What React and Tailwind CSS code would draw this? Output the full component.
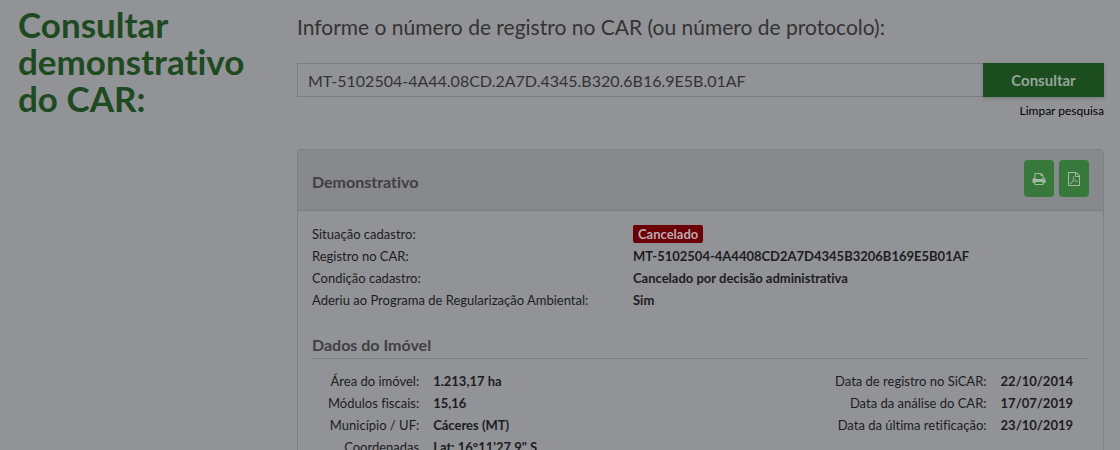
const situacao = [
  { label: 'Situação cadastro:', value: 'Cancelado', badge: true },
  { label: 'Registro no CAR:', value: 'MT-5102504-4A4408CD2A7D4345B3206B169E5B01AF' },
  { label: 'Condição cadastro:', value: 'Cancelado por decisão administrativa' },
  { label: 'Aderiu ao Programa de Regularização Ambiental:', value: 'Sim' },
];

const imovel = [
  { label: 'Área do imóvel:', value: '1.213,17 ha' },
  { label: 'Módulos fiscais:', value: '15,16' },
  { label: 'Município / UF:', value: 'Cáceres (MT)' },
  { label: 'Coordenadas', value: 'Lat: 16°11\'27.9" S' },
];

const datas = [
  { label: 'Data de registro no SiCAR:', value: '22/10/2014' },
  { label: 'Data da análise do CAR:', value: '17/07/2019' },
  { label: 'Data da última retificação:', value: '23/10/2019' },
];

function PrintIcon() {
  return (
    <svg viewBox="0 0 1792 1792" className="size-3.5" fill="currentColor" aria-hidden="true">
      <path d="M448 1536h896v-256h-896v256zm0-640h896v-384h-160q-40 0-68-28t-28-68v-160h-640v640zm1152 64q0-26-19-45t-45-19-45 19-19 45 19 45 45 19 45-19 19-45zm128 0v416q0 13-9.5 22.5t-22.5 9.5h-224v160q0 40-28 68t-68 28h-960q-40 0-68-28t-28-68v-160h-224q-13 0-22.5-9.5t-9.5-22.5v-416q0-79 56.5-135.5t135.5-56.5h64v-544q0-40 28-68t68-28h672q40 0 88 20t76 48l152 152q28 28 48 76t20 88v256h64q79 0 135.5 56.5t56.5 135.5z" />
    </svg>
  );
}

function PdfIcon() {
  return (
    <svg viewBox="0 0 1792 1792" className="size-3.5" fill="currentColor" aria-hidden="true">
      <path d="M1596 380q28 28 48 76t20 88v1152q0 40-28 68t-68 28h-1344q-40 0-68-28t-28-68v-1600q0-40 28-68t68-28h896q40 0 88 20t76 48zm-444-244v376h376q-10-29-22-41l-313-313q-12-12-41-22zm384 1528v-1024h-416q-40 0-68-28t-28-68v-416h-768v1536h1280zm-514-593q33 26 84 56 59-7 117-7 147 0 177 49 16 22 2 52 0 1-1 2l-2 2v1q-6 38-71 38-48 0-115-20t-130-53q-221 24-392 83-153 262-242 262-15 0-28-7l-24-12q-1-1-6-5-10-10-6-36 9-40 56-91.5t132-96.5q14-9 23 6 2 2 2 4 52-85 107-197 68-136 104-262-24-82-30.5-159.5t6.5-127.5q11-40 42-40h22q23 0 35 15 18 21 9 68-2 6-4 8 1 3 1 8v30q-2 123-14 192 55 164 146 238zm-576 411q52-24 137-158-51 40-87.5 84t-49.5 74zm398-920q-15 42-2 132 1-7 7-44 0-3 7-43 1-4 4-8-1-1-1-2-1-2-1-3-1-22-13-36 0 1-1 2v2zm-124 661q135-54 284-81-2-1-13-9.5t-16-13.5q-76-67-127-176-27 86-83 197-30 56-45 83zm646-16q-24-24-140-24 76 28 124 28 14 0 18-1 0-1-2-3z" />
    </svg>
  );
}

function ActionButton({ label, children }) {
  return (
    <button
      type="button"
      aria-label={label}
      className="flex h-[37px] w-[30px] items-center justify-center rounded bg-[#37793a] text-[#a3bba5]"
    >
      {children}
    </button>
  );
}

function DataTable({ rows }) {
  return (
    <table className="leading-[22px]">
      <tbody>
        {rows.map((row) => (
          <tr key={row.label}>
            <th scope="row" className="p-0 pr-3.5 text-right font-normal">{row.label}</th>
            <td className="p-0 font-bold">{row.value}</td>
          </tr>
        ))}
      </tbody>
    </table>
  );
}

export default function App() {
  return (
    <div className="h-screen overflow-hidden bg-[#929397] font-['Lato','Liberation_Sans',sans-serif] text-[13px] text-[#1c1d1f] [font-variant-ligatures:none]">
      <main className="grid grid-cols-4 gap-[30px] pr-4 pl-[18px]">
        <h1 className="pt-1.5 text-[35px] leading-[37px] font-bold text-[#1d4a20]">
          Consultar demonstrativo do CAR:
        </h1>

        <div className="col-span-3 pt-3">
          <form onSubmit={(e) => e.preventDefault()}>
            <label htmlFor="registro" className="block text-[21px] leading-[30px] text-[#333333]">
              Informe o número de registro no CAR (ou número de protocolo):
            </label>
            <div className="mt-[21px] flex">
              <input
                id="registro"
                type="text"
                defaultValue="MT-5102504-4A44.08CD.2A7D.4345.B320.6B16.9E5B.01AF"
                className="h-[34px] min-w-0 flex-1 border border-r-0 border-[#7c7d81] bg-transparent px-2.5 text-base text-[#333333] outline-none"
              />
              <button
                type="submit"
                className="h-[34px] w-[121px] bg-[#1c4d1f] text-[15px] font-bold text-[#95a597] shadow-[0_1px_4px_rgba(0,0,0,0.2)]"
              >
                Consultar
              </button>
            </div>
            <div className="mt-1 text-right">
              <a href="#limpar" className="text-xs leading-5 text-black">Limpar pesquisa</a>
            </div>
          </form>

          <section className="mt-7 rounded border border-[#7f8084]">
            <header className="flex items-start justify-between border-b border-[#7c7d81] bg-[#88898c] px-3.5 pt-2.5 pb-[13px]">
              <h2 className="pt-2.5 text-base leading-6 font-bold text-[#3f4042]">Demonstrativo</h2>
              <div className="flex gap-[5px]">
                <ActionButton label="Imprimir">
                  <PrintIcon />
                </ActionButton>
                <ActionButton label="Baixar PDF">
                  <PdfIcon />
                </ActionButton>
              </div>
            </header>

            <div className="px-3.5 pt-3">
              <dl className="leading-[22px]">
                {situacao.map((item) => (
                  <div key={item.label} className="flex">
                    <dt className="w-[321px] shrink-0">{item.label}</dt>
                    <dd className="font-bold">
                      {item.badge ? (
                        <span className="rounded-xs bg-[#6c0007] px-[5px] py-px text-[#bcabae]">{item.value}</span>
                      ) : (
                        item.value
                      )}
                    </dd>
                  </div>
                ))}
              </dl>

              <h3 className="mt-[22px] border-b border-[#7c7d81] pb-px text-base leading-6 font-bold text-[#3f4042]">
                Dados do Imóvel
              </h3>

              <div className="flex items-start justify-between pt-[11px] pr-4 pb-6 pl-4">
                <DataTable rows={imovel} />
                <DataTable rows={datas} />
              </div>
            </div>
          </section>
        </div>
      </main>
    </div>
  );
}
